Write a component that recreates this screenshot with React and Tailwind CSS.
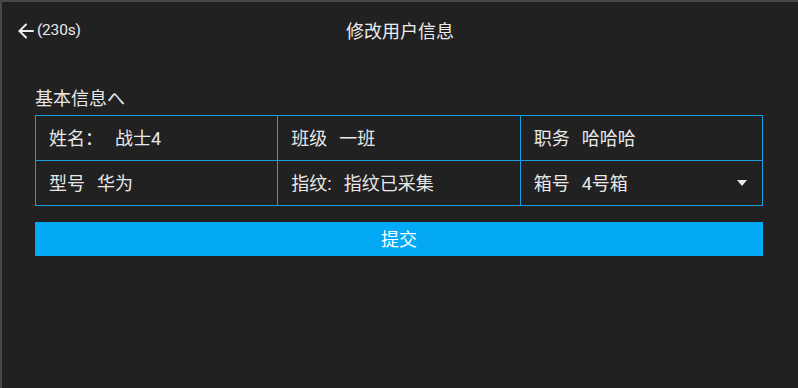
import React from "react";

const font = { fontFamily: "Roboto, 'Noto Sans CJK SC', sans-serif" };

function Cell({ label, value, arrow }) {
  return (
    <div className="h-[45px] border-r border-b border-[#1b9de2] pl-[13px] pr-[15px] flex items-center text-[18px] text-[#e8e8e8]">
      <span>{label}</span>
      <span className="ml-[12px]">{value}</span>
      {arrow && (
        <svg className="ml-auto" width="10" height="6" viewBox="0 0 10 6">
          <path d="M0 0 H10 L5 6 Z" fill="#e8e8e8" />
        </svg>
      )}
    </div>
  );
}

export default function App() {
  return (
    <div
      className="w-[798px] h-[388px] bg-[#212121] border-l-2 border-t-2 border-[#474747] overflow-hidden text-[#e8e8e8]"
      style={font}
    >
      <div className="h-[58px] grid grid-cols-[1fr_auto_1fr] items-center pl-[16px]">
        <div className="flex items-center">
          <svg width="16" height="16" viewBox="0 0 16 16" fill="none" stroke="#ececec" strokeWidth="2" strokeLinecap="round" strokeLinejoin="round">
            <path d="M8 1.5 L1.5 8 L8 14.5" />
            <path d="M1.5 8 H15" />
          </svg>
          <span className="ml-[3px] text-[15.5px] tracking-[-0.2px]">(230s)</span>
        </div>
        <div className="text-[18px] text-[#ececec] -ml-[16px]">修改用户信息</div>
        <div />
      </div>
      <div className="pl-[33px] pr-[35px]">
        <div className="mt-[27px] text-[18px] leading-[24px]">基本信息へ</div>
        <div className="mt-[4px] grid grid-cols-3 border-l border-t border-[#1b9de2]">
          <Cell label="姓名：" value="战士4" />
          <Cell label="班级" value="一班" />
          <Cell label="职务" value="哈哈哈" />
          <Cell label="型号" value="华为" />
          <Cell label="指纹:" value="指纹已采集" />
          <Cell label="箱号" value="4号箱" arrow />
        </div>
        <button className="mt-[16px] w-full h-[34px] bg-[#03a9f4] text-white text-[18px] flex items-center justify-center">
          提交
        </button>
      </div>
    </div>
  );
}
